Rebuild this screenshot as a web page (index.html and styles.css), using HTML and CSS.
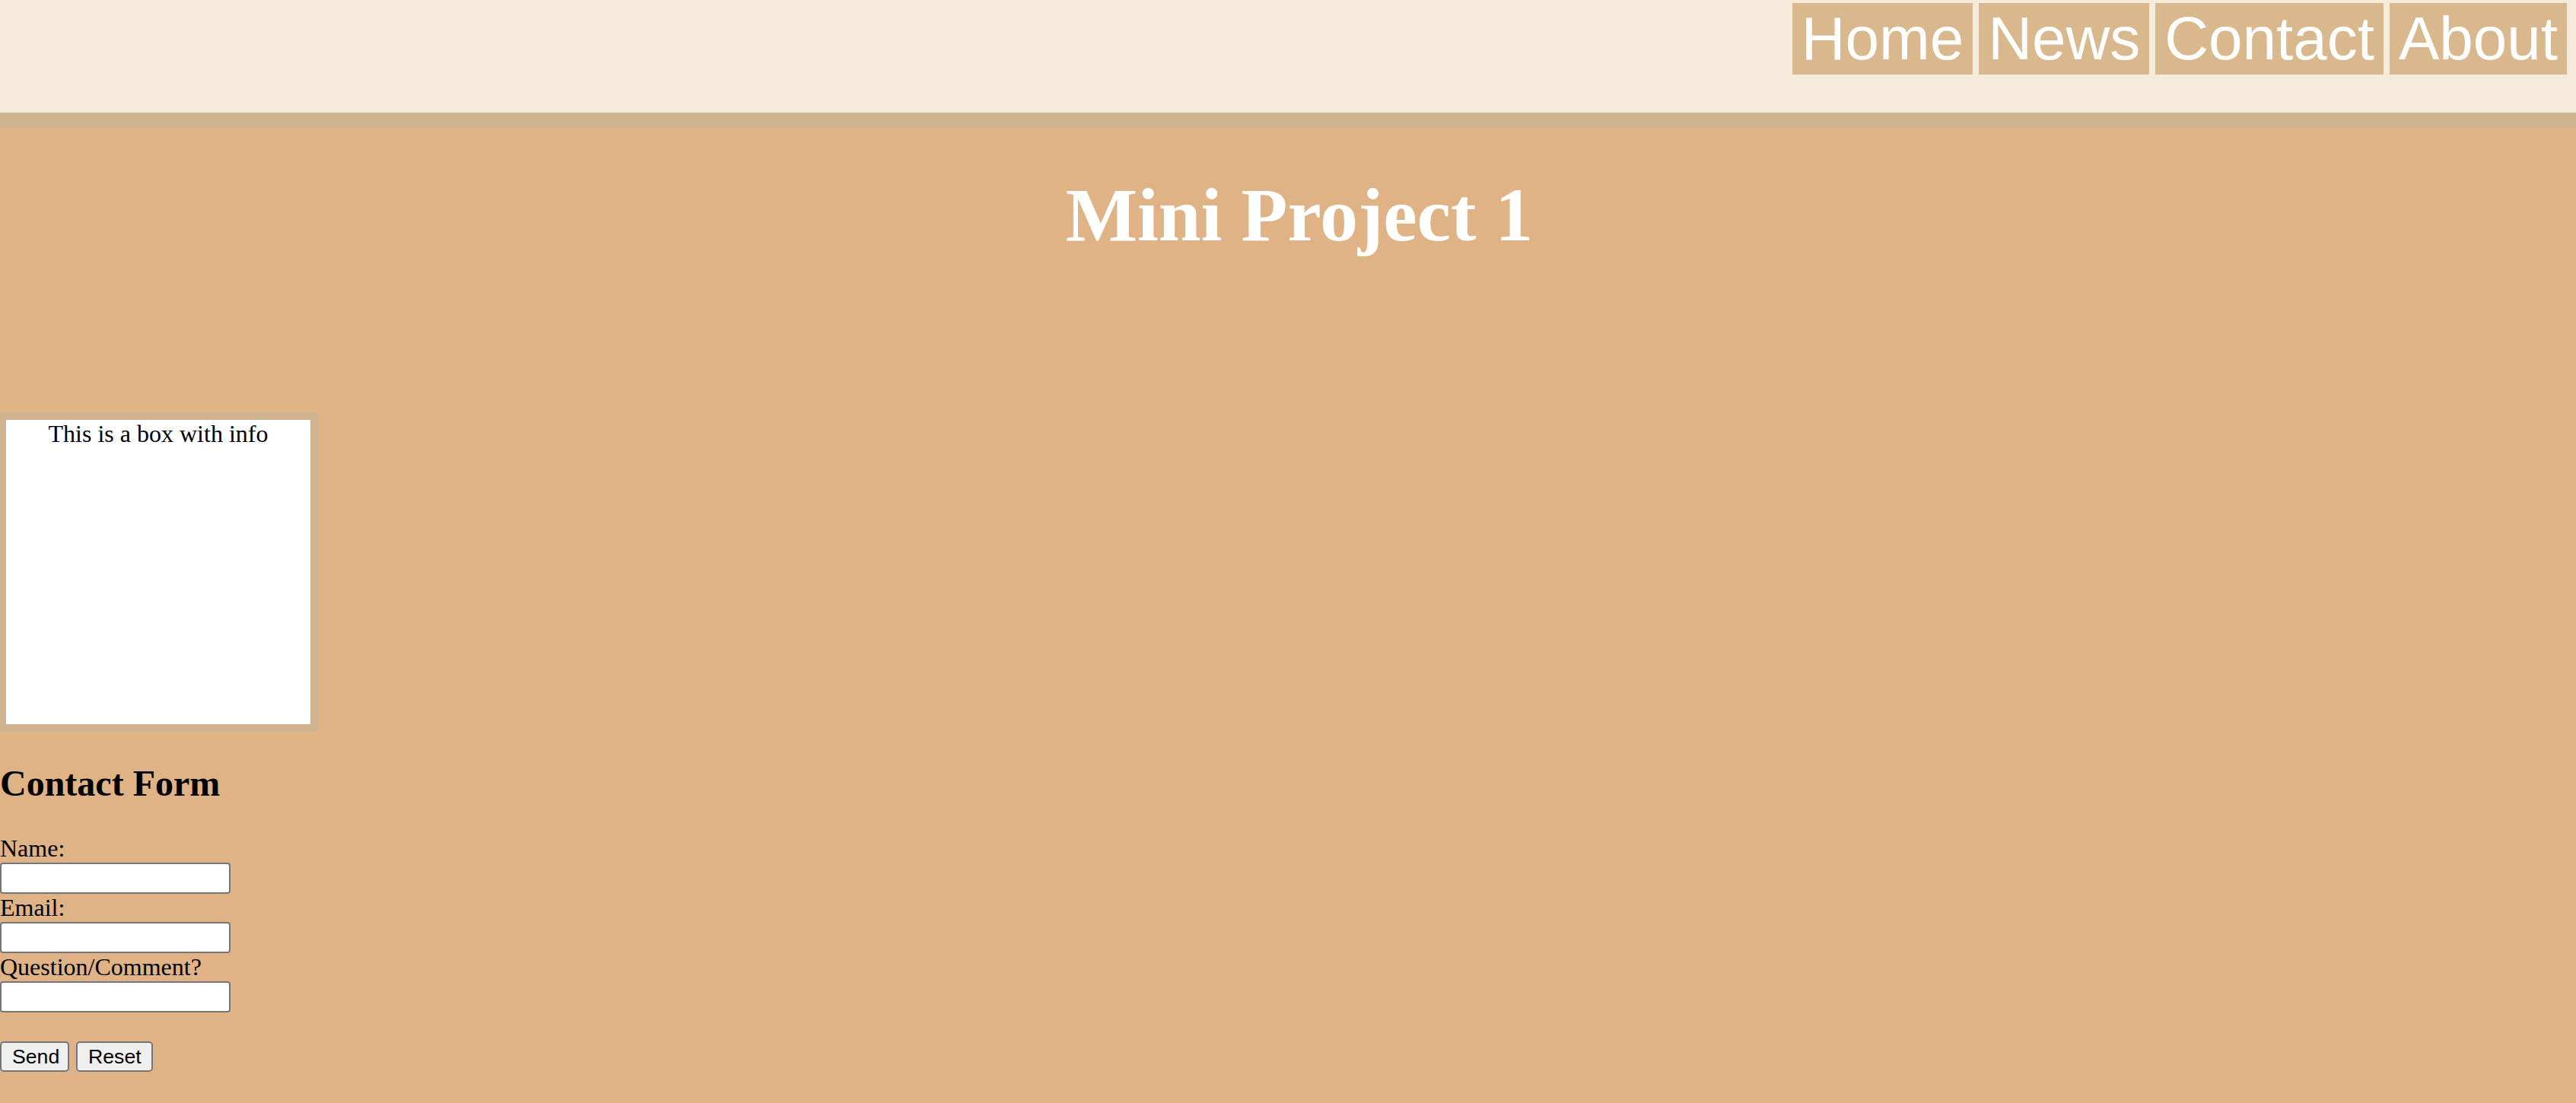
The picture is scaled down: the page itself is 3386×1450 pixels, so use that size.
FILE: index.html
```html
<!DOCTYPE html>
<html>
<head>
<meta charset="utf-8">
<title>Mini Project 1</title>
<link rel="stylesheet" href="styles.css">
</head>
<body>
<header class="site-header">
  <nav class="nav">
    <a class="nav-item" href="#">Home</a>
    <a class="nav-item" href="#">News</a>
    <a class="nav-item" href="#">Contact</a>
    <a class="nav-item" href="#">About</a>
  </nav>
</header>
<main class="main">
  <h1 class="title">Mini Project 1</h1>
  <div class="info-box">This is a box with info</div>
  <h2 class="form-title">Contact Form</h2>
  <form class="contact-form">
    <label class="field-label">Name:</label>
    <input class="field-input" type="text">
    <label class="field-label">Email:</label>
    <input class="field-input" type="text">
    <label class="field-label">Question/Comment?</label>
    <input class="field-input" type="text">
    <div class="buttons">
      <button class="btn" type="button">Send</button>
      <button class="btn" type="reset">Reset</button>
    </div>
  </form>
</main>
</body>
</html>
```
FILE: styles.css
```css
html, body {
  margin: 0;
  padding: 0;
}
body {
  background: #DFB386;
  font-family: "Liberation Serif", "Times New Roman", serif;
  color: #000;
  min-height: 1450px;
  overflow: hidden;
}
.site-header {
  background: #F6EBDA;
  height: 148px;
  border-bottom: 20px solid #CEB48F;
}
.nav {
  display: flex;
  justify-content: flex-end;
  gap: 8px;
  padding: 4px 12px 0 0;
}
.nav-item {
  background: #D8B88C;
  color: #fff;
  text-decoration: none;
  font-family: "Liberation Sans", Arial, sans-serif;
  font-size: 80px;
  line-height: normal;
  padding: 1px 12px;
}
.main {
  padding: 0;
}
.title {
  margin: 57px 0 0 0;
  padding-left: 30px;
  text-align: center;
  color: #fff;
  font-size: 100px;
  font-weight: bold;
  line-height: 115px;
}
.info-box {
  margin: 202px 0 0 -2px;
  width: 400px;
  height: 400px;
  border: 10px solid #CEB48F;
  background: #fff;
  text-align: center;
  font-size: 32px;
  line-height: 37px;
}
.form-title {
  margin: 40px 0 40px 0;
  font-size: 48px;
  font-weight: bold;
  line-height: 55px;
}
.contact-form {
  display: flex;
  flex-direction: column;
  align-items: flex-start;
}
.field-label {
  font-size: 32px;
  line-height: 37px;
  height: 37px;
}
.field-input {
  box-sizing: border-box;
  width: 303px;
  height: 41px;
  margin: 0;
  border: 2px solid #767676;
  border-radius: 4px;
  background: #fff;
  padding: 2px 4px;
  font-size: 26px;
}
.buttons {
  display: flex;
  gap: 9px;
  margin-top: 38px;
}
.btn {
  box-sizing: border-box;
  height: 40px;
  margin: 0;
  padding: 0 14px;
  background: #EFEFEF;
  border: 2px solid #767676;
  border-radius: 5px;
  font-family: "Liberation Sans", Arial, sans-serif;
  font-size: 26.67px;
  color: #000;
}
.btn:first-child {
  width: 91px;
}
.btn:last-child {
  width: 101px;
}
```
